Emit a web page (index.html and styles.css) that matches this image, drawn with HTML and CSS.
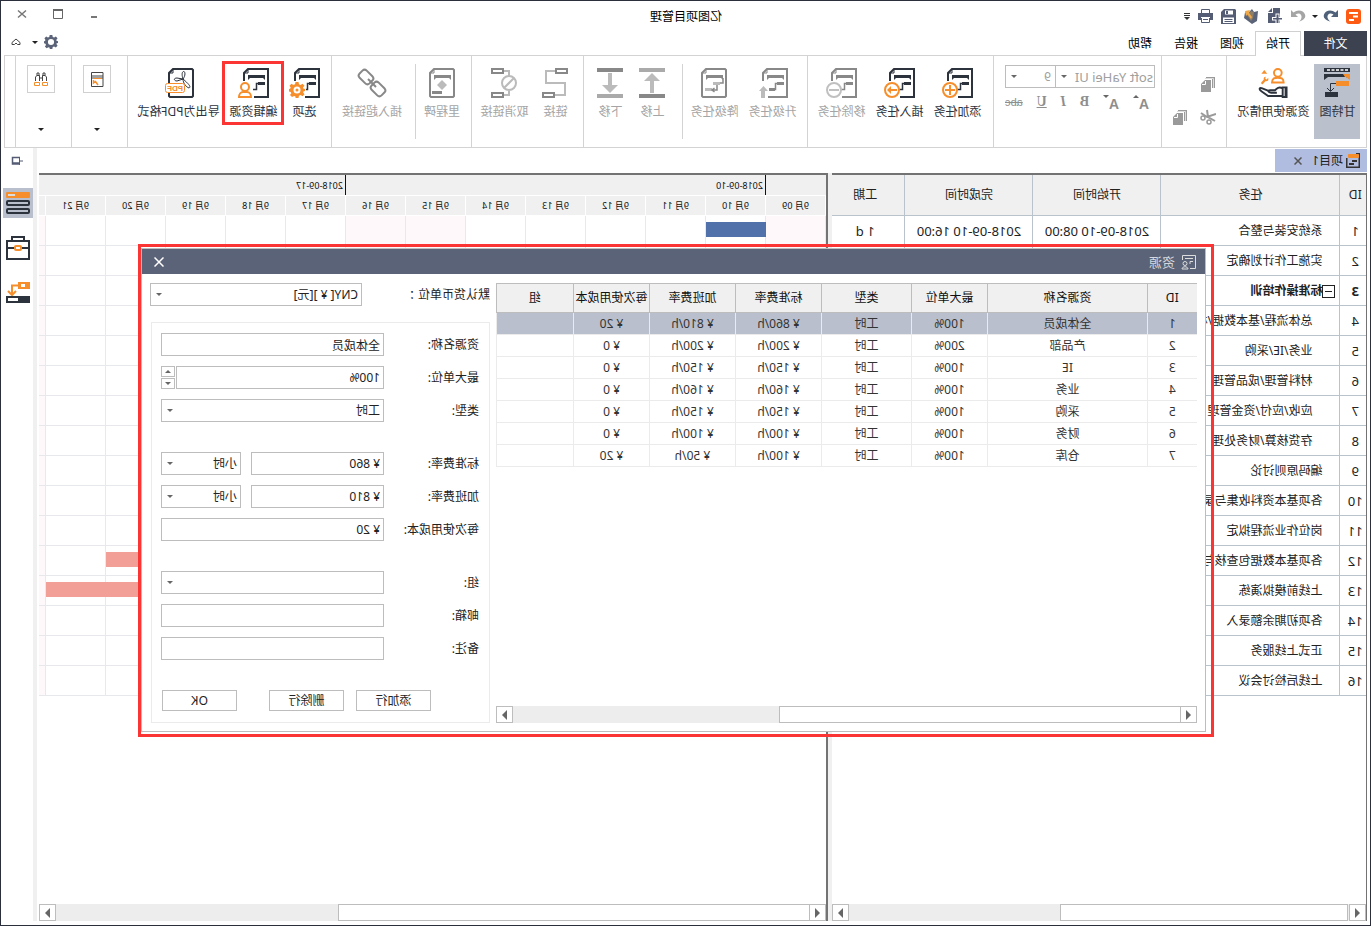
FILE: index.html
```html
<!DOCTYPE html>
<html lang="zh-CN">
<head>
<meta charset="utf-8">
<title>亿图项目管理</title>
<link rel="stylesheet" href="styles.css">
</head>
<body>
<svg class="defs" aria-hidden="true">
  <symbol id="i-doc" viewBox="0 0 31 30">
    <path d="M15 29H1V1H21L25 5V13" fill="none" stroke="currentColor" stroke-width="2"/>
    <path d="M21 1V5H25" fill="none" stroke="currentColor"/>
    <path d="M4 7H21V12L19 10H6L4 12Z" fill="currentColor"/>
    <path d="M4 14H11V17H4Z" fill="currentColor"/>
    <path d="M10 15.500H12.500V21.500H16" fill="none" stroke="currentColor" stroke-width="1.500"/>
  </symbol>
  <symbol id="i-page" viewBox="0 0 26 30">
    <path d="M2 1H21L25 5V28L24 29H2L1 28V2Z" fill="none" stroke="currentColor" stroke-width="2"/>
    <path d="M21 1V5H25" fill="none" stroke="currentColor"/>
    <path d="M4 7H21V12L19 10H6L4 12Z" fill="currentColor"/>
  </symbol>
  <symbol id="i-copy" viewBox="0 0 14 16">
    <path d="M0 1H9V3H3V12H0Z" fill="currentColor"/>
    <path d="M4 4H10L14 8V16H4Z" fill="currentColor"/>
    <path d="M9.500 5V8.500H13" fill="none" stroke="#fff"/>
    <path d="M1.500 12V2.500H10" fill="none" stroke="#ddd"/>
  </symbol>
  <symbol id="i-gear" viewBox="0 0 16 16">
    <path d="M6.500 0h3l.5 2.200 1.600.7L13.500 1.700l2 2-1.200 1.900.6 1.200L16 7V9.500l-1.700.5-.6 1.300 1.300 1.800-2 2-2-1.200-1.500.7L9.500 16h-3L6 13.800l-1.500-.7-2 1.200-2-2 1.300-1.900L1.500 9.500 0 9V7L1.700 6.500 2 5.600.5 3.700l2-2 1.900 1.200L6 2.200Z" fill="currentColor"/>
  </symbol>
</svg>

<div class="app">
  <header class="titlebar">
    <div class="quick">
      <button class="icon-btn" aria-label="亿图"><svg width="15" height="15" viewBox="0 0 15 15"><rect width="15" height="15" rx="3" fill="#fd5a14"/><path d="M3 4H12M3 7.500H8M7 11H12" stroke="#fff" stroke-width="2" fill="none"/></svg></button>
      <button class="icon-btn" aria-label="撤销"><svg width="15" height="14" viewBox="0 0 15 14"><path d="M0 1V8H7L4.500 5.500C8 3 11 5 10.500 8.500C10.300 10 9 11.500 7.500 12.500C13 11 15 8.500 14 5.500C12.500 1 6.500 0 2.500 3.500Z" fill="#4f6079"/></svg></button>
      <i class="caret dark"></i>
      <button class="icon-btn" aria-label="重做"><svg width="15" height="14" viewBox="0 0 15 14"><path d="M15 1V8H8L10.500 5.500C7 3 4 5 4.500 8.500C4.700 10 5.500 11.500 7 12.500C2 11 0 8.500 1 5.500C2.500 1 8.500 0 12.500 3.500Z" fill="#a5a5a5"/></svg></button>
      <button class="icon-btn" aria-label="新建"><svg width="16" height="16" viewBox="0 0 16 16"><path d="M3 0H10V5H15V15H3Z" fill="#555d74"/><path d="M11 0L15 4H11Z" fill="#555d74"/><path d="M3.500 5.500H7.500V9H11V12.500H7.500V16H3.500V12.500H0V9H3.500Z" fill="#fff"/><path d="M4.500 6.500H6.500V10H10V11.500H6.500V15H4.500V11.500H1V10H4.500Z" fill="#555d74"/></svg></button>
      <button class="icon-btn" aria-label="打开"><svg width="15" height="15" viewBox="0 0 15 15"><path d="M1 2L5 3L7 0L10 3L14 3.500L15 9L7 15L2 12Z" fill="#5b6378"/><path d="M5 3L8 2L12 6L8 12L6 9Z" fill="#8f7f66"/><path d="M9 1L14 2L13 7L11.500 5.500L8 10L7 8L10 4Z" fill="#f0a94a"/></svg></button>
      <button class="icon-btn" aria-label="保存"><svg width="15" height="15" viewBox="0 0 15 15"><path d="M1 0H12L15 3V15H0V1Z" fill="#555d74"/><path d="M3 1.500H11V5.500H3ZM2 8.500H13V14H2Z" fill="#fff"/><path d="M8 2H10V5H8ZM3.500 10H11.500V11H3.500ZM3.500 12H11.500V13H3.500Z" fill="#555d74"/></svg></button>
      <button class="icon-btn" aria-label="打印"><svg width="15" height="14" viewBox="0 0 15 14"><path d="M3.500 4V0.500H11.500V4M3.500 9V13.500H11.500V9" fill="#fff" stroke="#555d74"/><path d="M0 4H15V11H12V8H3V11H0Z" fill="#555d74"/><path d="M5 10.500H10" stroke="#555d74"/></svg></button>
      <button class="icon-btn" aria-label="更多"><svg width="6" height="7" viewBox="0 0 6 7"><path d="M0 .5H6M0 2.500H6" stroke="#333"/><path d="M0 4H6L3 7Z" fill="#333"/></svg></button>
    </div>
    <h1>亿图项目管理</h1>
    <div class="winbtns">
      <button aria-label="最小化"><svg width="10" height="10" viewBox="0 0 10 10"><path d="M2 8H8" stroke="#777" stroke-width="2"/></svg></button>
      <button aria-label="最大化"><svg width="10" height="10" viewBox="0 0 10 10"><path d="M.5 1H9.500V9.500H.5Z" stroke="#666" fill="none"/><path d="M0 1H10" stroke="#666" stroke-width="2"/></svg></button>
      <button aria-label="关闭"><svg width="10" height="10" viewBox="0 0 10 10"><path d="M1 1.500L9 8.500M9 1.500L1 8.500" stroke="#777" stroke-width="1.500"/></svg></button>
    </div>
  </header>

  <nav class="tabs">
    <button class="file">文件</button>
    <button class="tab active">开始</button>
    <button class="tab">视图</button>
    <button class="tab">报告</button>
    <button class="tab">帮助</button>
    <div class="tabs-end">
      <button class="icon-btn gear" aria-label="设置"><svg width="14" height="14" viewBox="0 0 16 16"><use href="#i-gear"/><circle cx="8" cy="8" r="3.500" fill="#fff"/></svg></button>
      <i class="caret dark"></i>
      <button class="icon-btn" aria-label="折叠"><svg width="10" height="8" viewBox="0 0 10 8"><path d="M1 6.500H3.500L5 5L6.500 6.500H9V4.500L5 1L1 4.500Z" fill="none" stroke="#444"/></svg></button>
    </div>
  </nav>

  <section class="ribbon">
    <div class="group g-view">
      <button class="tool on"><svg width="26" height="30" viewBox="0 0 26 30"><path d="M0 0H26V4H0Z" fill="#2d333d"/><path d="M2 2H24" stroke="#fff" stroke-width="1.500" stroke-dasharray="3 1.500"/><path d="M0 6H26V12L22 9H4L0 11Z" fill="#2d333d"/><path d="M0 6H7L5 9H4L0 12Z" fill="#f68e2c"/><path d="M1 13H14V18H1Z" fill="#f68e2c"/><path d="M12 24H25V29H12Z" fill="#2d333d"/><path d="M14 15.500H19.500V23M16 20L19.500 23.500L23 20" fill="none" stroke="#2d333d"/></svg><span>甘特图</span></button>
      <button class="tool wide"><svg width="30" height="30" viewBox="0 0 30 31"><path d="M2 20V29M5 20H1V30H5ZM5 21C9 19 11 21 13 23H18C21 23 20 25.500 17 25.500H11M19 24L26 21C29 20 30 22 27 24L20 29H5" fill="none" stroke="#2d333d" stroke-width="2"/><circle cx="10" cy="5" r="4" fill="none" stroke="#f68e2c" stroke-width="2"/><path d="M4 15C4 10 7 10 10 10S16 10 16 15Z" fill="none" stroke="#f68e2c" stroke-width="2"/><path d="M21 6L24 2L27 6Z" fill="#f68e2c"/><path d="M20 10C19 13 21 14 22.500 13.500L26 17L27.500 15.500L24.500 12C25 10 24 9 22.500 9L23 11L21.500 12Z" fill="#f68e2c"/></svg><span>资源使用情况</span></button>
    </div>
    <div class="group g-clip">
      <button class="icon-btn c1" aria-label="粘贴"><svg width="14" height="16"><use href="#i-copy"/></svg></button>
      <button class="icon-btn c2" aria-label="剪切"><svg width="16" height="16" viewBox="0 0 16 16"><path d="M0 5L9 8L15 4M1 12L8 8L9 1" fill="none" stroke="currentColor" stroke-width="2"/><circle cx="7" cy="13" r="2" fill="none" stroke="currentColor" stroke-width="1.500"/><circle cx="13" cy="9" r="2" fill="none" stroke="currentColor" stroke-width="1.500"/></svg></button>
      <button class="icon-btn c3" aria-label="复制"><svg width="14" height="16"><use href="#i-copy"/></svg></button>
    </div>
    <div class="group g-font">
      <div class="font-row">
        <span class="sel muted f-name"><select aria-label="字体"><option>soft YaHei UI</option></select></span>
        <span class="sel muted f-size"><select aria-label="字号"><option>9</option></select></span>
      </div>
      <div class="font-btns">
        <button class="sans" aria-label="增大字号">A<i class="up"></i></button>
        <button class="sans" aria-label="减小字号">A<i class="down"></i></button>
        <button><b>B</b></button>
        <button><em>I</em></button>
        <button><u>U</u></button>
        <button class="abc"><s>abc</s></button>
      </div>
    </div>
    <div class="group g-task">
      <button class="tool"><svg width="31" height="30" viewBox="0 0 31 30"><use href="#i-doc"/><circle cx="23" cy="22" r="7" fill="#fff" stroke="#f68e2c" stroke-width="2"/><path d="M18 22H28M23 17V27" stroke="#f68e2c" stroke-width="2"/></svg><span>添加任务</span></button>
      <button class="tool"><svg width="31" height="30" viewBox="0 0 31 30"><use href="#i-doc"/><circle cx="23" cy="22" r="7" fill="#fff" stroke="#f68e2c" stroke-width="2"/><path d="M18 22H27" stroke="#f68e2c" stroke-width="2"/><path d="M24 18L28 22L24 26Z" fill="#f68e2c"/></svg><span>插入任务</span></button>
      <button class="tool off"><svg width="31" height="30" viewBox="0 0 31 30"><use href="#i-doc"/><circle cx="23" cy="22" r="7" fill="#fff" stroke="#c0c0c0" stroke-width="2"/><path d="M18 22H28" stroke="#c0c0c0" stroke-width="2"/></svg><span>移除任务</span></button>
    </div>
    <div class="group g-level">
      <button class="tool off"><svg width="31" height="30" viewBox="0 0 31 30"><use href="#i-doc"/><path d="M13 20H19V23H13ZM1 28H20V30H1Z" fill="currentColor"/><path d="M23 30V23H20L24.500 18L29 23H27V30Z" fill="#bbb"/></svg><span>升级任务</span></button>
      <button class="tool off"><svg width="26" height="30" viewBox="0 0 26 30"><use href="#i-page"/><path d="M4 10V15H7" fill="none" stroke="currentColor" stroke-width="1.500"/><path d="M7 14H14V17H7ZM15 20H22V23H15Z" fill="#bbb"/><path d="M10 17V22H15M12.500 20L15 22L12.500 24" fill="none" stroke="currentColor" stroke-width="1.500"/></svg><span>降级任务</span></button>
    </div>
    <div class="vline"></div>
    <div class="group g-move">
      <button class="tool off"><svg width="26" height="30" viewBox="0 0 26 30"><path d="M0 0H26V4H0Z" fill="#aaa"/><path d="M0 26H26V30H0Z" fill="#888"/><path d="M11 25V13H5L13 5L21 13H15V25Z" fill="#bbb"/></svg><span>上移</span></button>
      <button class="tool off"><svg width="26" height="30" viewBox="0 0 26 30"><path d="M0 0H26V4H0Z" fill="#888"/><path d="M0 26H26V30H0Z" fill="#aaa"/><path d="M11 5V17H5L13 25L21 17H15V5Z" fill="#bbb"/></svg><span>下移</span></button>
    </div>
    <div class="group g-link">
      <button class="tool off"><svg width="26" height="30" viewBox="0 0 26 30"><path d="M13 3H22V15H3V27H13" fill="none" stroke="#bbb" stroke-width="2"/><path d="M1 1H12V5H1ZM14 25H25V29H14Z" fill="#fff" stroke="#888" stroke-width="2"/></svg><span>链接</span></button>
      <button class="tool off"><svg width="26" height="30" viewBox="0 0 26 30"><path d="M14 3H8V8M14 27H8V23" fill="none" stroke="#bbb" stroke-width="2"/><path d="M14 1H25V5H14ZM14 25H25V29H14Z" fill="#fff" stroke="#888" stroke-width="2"/><circle cx="8" cy="15" r="7" fill="#fff" stroke="#bbb" stroke-width="2"/><path d="M13 10L3 20" stroke="#bbb" stroke-width="2" transform="matrix(-1 0 0 1 16 0)"/></svg><span>取消链接</span></button>
    </div>
    <div class="group g-mile">
      <button class="tool off"><svg width="26" height="30" viewBox="0 0 26 30"><use href="#i-page"/><path d="M13 12L18 17L13 22L8 17Z" fill="#bbb"/><path d="M13 23H23V26H13Z" fill="currentColor"/></svg><span>里程碑</span></button>
    </div>
    <div class="vline"></div>
    <div class="group g-hyper">
      <button class="tool off"><svg width="30" height="30" viewBox="0 0 30 30"><g fill="none" stroke="#888" stroke-width="2"><rect x="-7" y="-5" width="14" height="10" rx="3" transform="translate(21 9) rotate(-45)"/><rect x="-7" y="-5" width="14" height="10" rx="3" transform="translate(9 21) rotate(-45)"/><path d="M11 19L19 11"/></g></svg><span>插入超链接</span></button>
    </div>
    <div class="group g-out">
      <button class="tool opt"><svg width="31" height="30" viewBox="0 0 31 30"><use href="#i-doc"/><circle cx="23" cy="22" r="9" fill="#fff"/><g color="#f68e2c"><use href="#i-gear" x="15" y="14" width="16" height="16"/></g><circle cx="23" cy="22" r="3.500" fill="#fff"/><circle cx="23" cy="22" r="1.500" fill="#f68e2c"/></svg><span>选项</span></button>
      <button class="tool res"><svg width="31" height="30" viewBox="0 0 31 30"><use href="#i-doc"/><circle cx="24" cy="19" r="4" fill="#fff" stroke="#f68e2c" stroke-width="2"/><path d="M18 29C18 26 20 24 22 24H26C28 24 30 26 30 29Z" fill="#fff" stroke="#f68e2c" stroke-width="2"/></svg><span>编辑资源</span></button>
      <button class="tool pdf"><svg width="31" height="30" viewBox="0 0 31 30"><path d="M2 1H21L25 5V28L24 29H2L1 28V2Z" fill="#fff" stroke="#2d333d" stroke-width="2"/><path d="M21 1V5H25" fill="none" stroke="#2d333d"/><path d="M11 11C8 7 9 3 10.500 3.500C12.500 4 12 8 11 11L17 10C21 10 20 13 17 13L11 11C11 15 8 19 5 20C3 19 4 17 11 11Z" fill="none" stroke="#2d333d"/><rect x="9.500" y="15.500" width="19" height="9" rx="2" fill="#fff" stroke="#f68e2c"/><text x="11" y="23" font-size="8" font-weight="700" font-family="Liberation Sans" fill="#f68e2c">PDF</text></svg><span>导出为PDF格式</span></button>
    </div>
    <div class="group g-mini">
      <button class="mini" aria-label="报表"><svg width="14" height="15" viewBox="0 0 14 15"><path d="M1 .5H12.500V14.500H1Z" fill="none" stroke="#444"/><path d="M1 4H13M1 6H13" stroke="#444"/><path d="M2 6.500H11" stroke="#f68e2c"/><path d="M6 13L8.500 9.500L10.500 11V8" fill="none" stroke="#f68e2c" stroke-width="1.500"/></svg></button>
      <i class="caret dark"></i>
    </div>
    <div class="group g-mini">
      <button class="mini" aria-label="查找"><svg width="14" height="15" viewBox="0 0 14 15"><path d="M3 4V1H5V4M9 4V1H11V4M1.500 9V5L3 3.500H5.500V9M8.500 9V3.500H11L12.500 5V9M5.500 6H8.500" fill="none" stroke="#444"/><path d="M.5 10.500H5.500V13.500H.5ZM8.500 10.500H13.500V13.500H8.500Z" fill="none" stroke="#f68e2c"/></svg></button>
      <i class="caret dark"></i>
    </div>
  </section>

  <main class="body">
    <div class="work">
      <div class="doc-tabs">
        <div class="doc-tab">
          <svg width="14" height="15" viewBox="0 0 14 15"><path d="M4 .75H.75V14.250H13.250V5" fill="none" stroke="#333" stroke-width="1.500"/><rect x="1" y="1" width="11" height="4" rx="1" fill="#f68e2c"/><path d="M3 8H8M6 11H11" stroke="#333" stroke-width="2"/></svg>
          <span>项目1</span>
          <button class="icon-btn" aria-label="关闭项目1"><svg width="8" height="8" viewBox="0 0 8 8"><path d="M.5 .5L7.500 7.500M7.500 .5L.5 7.500" stroke="#555" stroke-width="1.500"/></svg></button>
        </div>
      </div>
      <div class="panes">
        <section class="pane list">
          <table class="tasks">
            <colgroup><col class="k-id"><col class="k-name"><col class="k-date"><col class="k-date"><col></colgroup>
            <thead><tr><th>ID</th><th>任务</th><th>开始时间</th><th>完成时间</th><th>工期</th></tr></thead>
            <tbody>
              <tr><td>1</td><td>系统安装与整合</td><td>2018-09-10 08:00</td><td>2018-09-10 16:00</td><td>1 d</td></tr>
              <tr><td>2</td><td>实施工作计划确定</td><td></td><td></td><td></td></tr>
              <tr class="sum"><td>3</td><td><button class="fold" aria-label="折叠任务"></button>标准操作培训</td><td></td><td></td><td></td></tr>
              <tr class="sub"><td>4</td><td>总体流程/基本数据/权限</td><td></td><td></td><td></td></tr>
              <tr class="sub"><td>5</td><td>业务/IE/采购</td><td></td><td></td><td></td></tr>
              <tr class="sub"><td>6</td><td>材料管理/成品管理</td><td></td><td></td><td></td></tr>
              <tr class="sub"><td>7</td><td>应收/应付/资金管理</td><td></td><td></td><td></td></tr>
              <tr class="sub"><td>8</td><td>存货核算/财务处理</td><td></td><td></td><td></td></tr>
              <tr><td>9</td><td>编码原则讨论</td><td></td><td></td><td></td></tr>
              <tr><td>10</td><td>各项基本资料收集与录入</td><td></td><td></td><td></td></tr>
              <tr><td>11</td><td>岗位作业流程拟定</td><td></td><td></td><td></td></tr>
              <tr><td>12</td><td>各项基本数据包查核与</td><td></td><td></td><td></td></tr>
              <tr><td>13</td><td>上线前模拟演练</td><td></td><td></td><td></td></tr>
              <tr><td>14</td><td>各项初期余额录入</td><td></td><td></td><td></td></tr>
              <tr><td>15</td><td>正式上线服务</td><td></td><td></td><td></td></tr>
              <tr><td>16</td><td>上线后检讨会议</td><td></td><td></td><td></td></tr>
            </tbody>
          </table>
          <div class="scroll s-list"><button aria-label="向左"><i class="l"></i></button><span class="thumb"></span><span class="track"></span><button aria-label="向右"><i class="r"></i></button></div>
        </section>
        <div class="splitter"></div>
        <section class="pane chart">
          <div class="weeks"><span></span><span class="wk">2018-09-10</span><span class="wk">2018-09-17</span></div>
          <div class="days"><span>9月 09</span><span>9月 10</span><span>9月 11</span><span>9月 12</span><span>9月 13</span><span>9月 14</span><span>9月 15</span><span>9月 16</span><span>9月 17</span><span>9月 18</span><span>9月 19</span><span>9月 20</span><span>9月 21</span><span></span></div>
          <div class="grid">
            <i class="col rest"></i><i class="col"></i><i class="col"></i><i class="col"></i><i class="col"></i><i class="col"></i><i class="col rest"></i><i class="col rest"></i><i class="col"></i><i class="col"></i><i class="col"></i><i class="col"></i><i class="col"></i><i class="col rest"></i>
            <b class="bar b1"></b><b class="bar b12"></b><b class="bar b13"></b>
          </div>
          <div class="scroll s-chart"><button aria-label="向左"><i class="l"></i></button><span class="thumb"></span><span class="track"></span><button aria-label="向右"><i class="r"></i></button></div>
        </section>
      </div>
    </div>
    <aside class="side">
      <button class="icon-btn pin" aria-label="固定"><svg width="12" height="10" viewBox="0 0 12 10"><path d="M3.500 1V9M0 5H3" stroke="#555d74" fill="none"/><path d="M3 1.500H10.500V8H3M3 7H11" stroke="#555d74" stroke-width="1.500" fill="none"/></svg></button>
      <button class="side-btn on" aria-label="列表"><svg width="24" height="22" viewBox="0 0 24 22"><rect width="24" height="6" rx="1" fill="#f68e2c"/><path d="M15 3H22" stroke="#ddd" stroke-width="2"/><rect x="1" y="9" width="22" height="4" rx="1" fill="none" stroke="#2d333d" stroke-width="2"/><rect x="1" y="17" width="22" height="4" rx="1" fill="none" stroke="#2d333d" stroke-width="2"/></svg></button>
      <button class="side-btn" aria-label="资源"><svg width="24" height="24" viewBox="0 0 24 24"><path d="M1 5H23V23H1ZM6 4V1H18V4M1 12H23" fill="none" stroke="#2d333d" stroke-width="2"/><rect x="9" y="10" width="6" height="4" rx="1" fill="#fff" stroke="#f68e2c" stroke-width="2"/></svg></button>
      <button class="side-btn" aria-label="链接"><svg width="24" height="22" viewBox="0 0 24 22"><path d="M0 0H12V7H0ZM5 2V5H9V2Z" fill="#f68e2c" fill-rule="evenodd"/><path d="M12 3.500H18V12M14 9L18 13L22 9" fill="none" stroke="#f68e2c" stroke-width="2"/><path d="M0 14H24V21H0ZM12 16V19H22V16Z" fill="#2d333d" fill-rule="evenodd"/></svg></button>
    </aside>
  </main>

  <div class="callout">
    <section class="dialog" role="dialog" aria-labelledby="dlg-title">
      <header class="dlg-head">
        <svg width="16" height="16" viewBox="0 0 16 16"><path d="M7 14.500H1.500V1.500H14.500V6M4 4.500H12" fill="none" stroke="#ddd"/><path d="M4 7.500H7V10M9 15C9 12 15 12 15 15Z" fill="none" stroke="#ddd"/><circle cx="12" cy="9.500" r="2" fill="none" stroke="#ddd"/></svg>
        <h2 id="dlg-title">资源</h2>
        <button class="icon-btn" aria-label="关闭"><svg width="10" height="10" viewBox="0 0 10 10"><path d="M.5 .5L9.500 9.500M9.500 .5L.5 9.500" stroke="#fff" stroke-width="1.500"/></svg></button>
      </header>
      <div class="dlg-body">
        <div class="res-pane">
          <table class="res">
            <colgroup><col class="r1"><col class="r2"><col class="r3"><col class="r4"><col class="r5"><col class="r5"><col class="r3"><col></colgroup>
            <thead><tr><th>ID</th><th>资源名称</th><th>最大单位</th><th>类型</th><th>标准费率</th><th>加班费率</th><th>每次使用成本</th><th>组</th></tr></thead>
            <tbody>
              <tr class="cur"><td>1</td><td>全体成员</td><td>100%</td><td>工时</td><td>¥ 860/h</td><td>¥ 810/h</td><td>¥ 20</td><td></td></tr>
              <tr><td>2</td><td>产品部</td><td>200%</td><td>工时</td><td>¥ 200/h</td><td>¥ 200/h</td><td>¥ 0</td><td></td></tr>
              <tr><td>3</td><td>IE</td><td>100%</td><td>工时</td><td>¥ 150/h</td><td>¥ 150/h</td><td>¥ 0</td><td></td></tr>
              <tr><td>4</td><td>业务</td><td>100%</td><td>工时</td><td>¥ 160/h</td><td>¥ 160/h</td><td>¥ 0</td><td></td></tr>
              <tr><td>5</td><td>采购</td><td>100%</td><td>工时</td><td>¥ 150/h</td><td>¥ 150/h</td><td>¥ 0</td><td></td></tr>
              <tr><td>6</td><td>财务</td><td>100%</td><td>工时</td><td>¥ 100/h</td><td>¥ 100/h</td><td>¥ 0</td><td></td></tr>
              <tr><td>7</td><td>仓库</td><td>100%</td><td>工时</td><td>¥ 100/h</td><td>¥ 50/h</td><td>¥ 20</td><td></td></tr>
            </tbody>
          </table>
          <div class="scroll s-res"><button aria-label="向左"><i class="l"></i></button><span class="thumb"></span><span class="track"></span><button aria-label="向右"><i class="r"></i></button></div>
        </div>
        <form class="form">
          <div class="currency"><label for="cur">默认货币单位 ：</label><span class="sel"><select id="cur"><option>CNY[ ¥ ][元]</option></select></span></div>
          <div class="box">
            <div class="row"><label for="f1">资源名称:</label><input id="f1" type="text" value="全体成员"></div>
            <div class="row"><label for="f2">最大单位:</label><input id="f2" type="text" value="100%"><span class="spin"><button type="button" aria-label="增加"><i class="up"></i></button><button type="button" aria-label="减少"><i class="down"></i></button></span></div>
            <div class="row"><label for="f3">类型:</label><span class="sel"><select id="f3"><option>工时</option></select></span></div>
            <div class="row part"><label for="f4">标准费率:</label><input id="f4" type="text" value="¥ 860"><span class="sel unit"><select aria-label="标准费率单位"><option>小时</option></select></span></div>
            <div class="row"><label for="f5">加班费率:</label><input id="f5" type="text" value="¥ 810"><span class="sel unit"><select aria-label="加班费率单位"><option>小时</option></select></span></div>
            <div class="row"><label for="f6">每次使用成本:</label><input id="f6" type="text" value="¥ 20"></div>
            <div class="row part"><label for="f7">组:</label><span class="sel"><select id="f7"><option></option></select></span></div>
            <div class="row"><label for="f8">邮箱:</label><input id="f8" type="text"></div>
            <div class="row"><label for="f9">备注:</label><input id="f9" type="text"></div>
            <div class="actions"><button type="button">添加行</button><button type="button">删除行</button><button type="button" class="ok">OK</button></div>
          </div>
        </form>
      </div>
    </section>
  </div>
</div>
</body>
</html>
```

FILE: styles.css
```css
* { box-sizing: border-box; }
body { margin: 0; background: #fff; overflow: hidden; }
body, button, input, select { font: 12px/16px "Noto Sans", "Noto Sans CJK SC", sans-serif; color: #222; }
button { margin: 0; padding: 0; border: 0; background: none; }
h1, h2 { margin: 0; font-size: 12px; font-weight: 400; }
i { font-style: normal; }
svg { display: block; flex: none; }
.defs { position: absolute; width: 0; height: 0; }

/* the whole window is mirrored left to right */
.app { position: relative; display: flex; flex-direction: column; min-height: 100vh; border: 1px solid #2b2f3b; background: #fff; transform: scaleX(-1); }

.icon-btn { display: flex; align-items: center; justify-content: center; color: inherit; }
.caret { border: 3px solid transparent; border-top-color: #777; border-bottom: 0; width: 0; height: 0; flex: none; }
.caret.dark { border-top-color: #222; }
.up, .down { width: 0; height: 0; border: 3px solid transparent; }
.up { border-top: 0; border-bottom-color: #666; }
.down { border-bottom: 0; border-top-color: #666; }

.titlebar { display: grid; grid-template-columns: 1fr auto 1fr; align-items: center; height: 30px; padding: 0 16px 0 9px; }
.titlebar h1 { padding: 1px 0 0 6px; color: #000; }
.quick { display: flex; align-items: center; gap: 8px; }
.quick .caret { margin: 0 -3px 0 -3px; }
.quick .caret + .icon-btn { margin-left: 1px; }
.winbtns { display: flex; justify-content: flex-end; gap: 26px; padding-bottom: 4px; }

.tabs { display: flex; height: 25px; margin: 0 3px -1px; position: relative; }
.file { width: 63px; height: 25px; margin-right: 3px; background: #3c4250; color: #fff; }
.tab { width: 46px; color: #000; }
.tab.active { border: 1px solid #d0d0d0; border-bottom: 0; background: #fff; position: relative; z-index: 1; }
.tabs-end { display: flex; align-items: center; gap: 9px; margin-left: auto; padding: 0 7px 3px 0; }
.tabs-end .caret { margin: 0 2px 0 -3px; }
.gear { color: #5b6378; }

.ribbon { display: flex; height: 93px; margin: 0 3px; border: 1px solid #d3d3d3; }
.group { display: flex; justify-content: center; padding: 8px 0 0 3px; position: relative; flex: none; border-right: 1px solid #d3d3d3; }
.vline { width: 1px; height: 75px; margin: 8px 0 0 -1px; background: #d3d3d3; position: relative; }
.g-view { width: 140px; padding-left: 0; }
.g-clip { width: 65px; }
.g-font { width: 168px; }
.g-task { width: 186px; padding-left: 2px; }
.g-level { width: 125px; border-right-color: transparent; }
.g-move { width: 99px; }
.g-link { width: 112px; justify-content: flex-start; padding-left: 2px; }
.g-mile { width: 56px; border-right-color: transparent; }
.g-hyper { width: 84px; }
.g-out { width: 204px; padding-left: 0; }
.g-mini { width: 56px; padding: 9px 0 0 4px; flex-direction: column; justify-content: flex-start; align-items: center; }
.tool { display: flex; flex-direction: column; align-items: center; gap: 6px; width: 58px; height: 75px; padding-top: 4px; white-space: nowrap; color: #2d333d; }
.tool.off { color: #888; }
.tool.off span { color: #a5a5a5; }
.tool.on { width: 46px; background: #bac0cc; }
.tool.wide { width: 82px; }
.g-move .tool { width: 42px; }
.g-link .tool { width: 51px; }
.tool.opt { width: 50px; }
.tool.res { width: 52px; position: relative; }
.tool.res::after { content: ""; position: absolute; inset: -3px -5px 14px; border: 3px solid #fb3434; }
.tool.pdf { width: 98px; }
.mini { display: flex; align-items: center; justify-content: center; width: 28px; height: 28px; border: 1px solid #d0d0d0; margin-bottom: 35px; }

.g-clip { display: grid; grid-template-columns: 16px 16px; column-gap: 12px; align-content: start; padding: 20px 0 0; row-gap: 17px; color: #9a9a9a; }
.c1 { grid-column: 1; }
.c2 { grid-column: 1; grid-row: 2; }
.c3 { grid-row: 2; }
.g-font { flex-direction: column; justify-content: flex-start; padding: 9px 11px 0 6px; gap: 5px; }
.font-row { display: flex; }
.f-name { width: 100px; }
.f-size { width: 51px; margin-left: -1px; }
.muted select { color: #a0a0a0; }
.f-name select { font-size: 13px; padding-left: 1px; }
.font-btns { display: flex; justify-content: space-between; padding: 0 0 0 6px; }
.font-btns button { color: #8e8e8e; font: 700 14px/18px "Liberation Serif", serif; display: flex; }
.font-btns .sans { font: 700 14px/22px "Liberation Sans", sans-serif; }
.font-btns .abc { font: 400 11px/18px "Liberation Sans", sans-serif; }
.font-btns i { margin-top: 2px; }

.sel { position: relative; display: block; height: 23px; }
.sel::after { content: ""; position: absolute; right: 6px; top: 10px; border: 3px solid transparent; border-top-color: #666; border-bottom: 0; }
select, input { width: 100%; height: 23px; padding: 0 3px; border: 1px solid #bdbdbd; border-radius: 0; background: #fff; appearance: none; outline: 0; }
.f-size select { padding-left: 4px; }

.body { display: flex; flex: 1; margin: 0 3px 4px; }
.work { flex: 1; min-width: 0; display: flex; flex-direction: column; padding-right: 2px; }
.doc-tabs { display: flex; padding: 1px 0; }
.doc-tab { display: flex; align-items: center; gap: 3px; width: 92px; height: 23px; padding-left: 7px; background: #b0bde0; }
.doc-tab .icon-btn { margin-left: 7px; }
.panes { display: flex; flex: 1; min-height: 0; }
.pane { display: flex; flex-direction: column; border-top: 2px solid #737373; min-width: 0; }
.list { flex: 0 0 535px; border-left: 1px solid #737373; }
.splitter { width: 4px; background: #f0f0f0; }
.chart { flex: 1; border-left: 2px solid #737373; }

table { border-collapse: collapse; table-layout: fixed; width: 100%; }
th { font-weight: 400; background: #f0f0f0; }
th, td { padding: 0; text-align: center; white-space: nowrap; overflow: hidden; }
.tasks th { height: 40px; }
.tasks td { height: 30px; padding-top: 1px; font-size: 13px; }
.tasks td:nth-child(2) { font-size: 12px; text-align: left; padding-left: 17px; }
.tasks th, .tasks td { border-right: 1px solid #b9c3cc; border-bottom: 1px solid #b9c3cc; }
.tasks th:last-child, .tasks td:last-child { border-right: 0; padding-left: 6px; }
.tasks th:first-child, .tasks td:first-child { padding-right: 4px; }
.tasks .sub td:nth-child(2) { padding-left: 27px; }
.tasks .sum td { font-weight: 700; }
.tasks .sum td:nth-child(2) { padding-left: 4px; }
.fold { width: 13px; height: 13px; border: 1px solid #222; background: linear-gradient(#222, #222) center / 7px 1px no-repeat; vertical-align: -2px; }
.k-id { width: 26px; }
.k-name { width: 179px; }
.k-date { width: 128px; }

.scroll { display: flex; height: 17px; margin-top: auto; background: #ededed; }
.scroll button { width: 17px; display: flex; align-items: center; justify-content: center; border: 1px solid #bdbdbd; background: #fff; flex: none; }
.thumb { border: 1px solid #bdbdbd; background: #fff; }
.track { flex: 1; }
.l, .r { border: 5px solid transparent; }
.l { border-left: 0; border-right-color: #666; }
.r { border-right: 0; border-left-color: #666; }
.s-list .thumb { flex: 0 0 54%; margin-left: 1px; }
.s-chart .thumb { flex: 0 0 60%; margin-left: -1px; }

.weeks, .days { display: grid; background: #f0f0f0; color: #111; font-size: 9px; border-bottom: 1px solid #fff; overflow: hidden; }
.weeks { grid-template-columns: 60px 420px 1fr; height: 21px; line-height: 21px; }
.wk { border-left: 1px solid #111; padding-left: 2px; }
.days, .grid { grid-template-columns: repeat(13, 60px) 1fr; }
.days { height: 20px; line-height: 20px; text-align: center; }
.days span { border-left: 1px solid #fff; }
.grid { display: grid; grid-template-rows: repeat(16, 30px); position: relative; }
.grid::after { content: ""; position: absolute; inset: 0; background: repeating-linear-gradient(transparent 0 29px, #e6e8eb 29px 30px); }
.col { grid-row: 1 / -1; border-left: 1px solid #e9e9e9; }
.rest { background: #fff8fa; }
.bar { height: 15px; margin-top: 6px; position: relative; z-index: 1; background: #f2a097; }
.b1 { grid-area: 1 / 2 / 2 / 3; background: #5071aa; }
.b12 { grid-area: 12 / 12 / 13 / 13; }
.b13 { grid-area: 13 / 11 / 14 / 14; }
.col:nth-child(1) { grid-column: 1; } .col:nth-child(2) { grid-column: 2; } .col:nth-child(3) { grid-column: 3; }
.col:nth-child(4) { grid-column: 4; } .col:nth-child(5) { grid-column: 5; } .col:nth-child(6) { grid-column: 6; }
.col:nth-child(7) { grid-column: 7; } .col:nth-child(8) { grid-column: 8; } .col:nth-child(9) { grid-column: 9; }
.col:nth-child(10) { grid-column: 10; } .col:nth-child(11) { grid-column: 11; } .col:nth-child(12) { grid-column: 12; }
.col:nth-child(13) { grid-column: 13; } .col:nth-child(14) { grid-column: 14; }

.side { display: flex; flex-direction: column; align-items: center; width: 33px; padding-top: 8px; border-left: 4px solid #f0f0f0; }
.pin { margin: 0 0 22px 3px; }
.side-btn { display: flex; align-items: center; justify-content: center; width: 30px; height: 30px; margin-bottom: 15px; }
.side-btn.on { background: #b9bfcc; }

.callout { position: absolute; z-index: 5; left: 156px; right: 137px; top: 243px; padding: 1px 0 2px 5px; border: 3px solid #fb3434; }
.dialog { background: #fff; border: 1px solid #bdbdbd; }
.dlg-head { display: flex; align-items: center; gap: 6px; height: 25px; padding: 0 12px 0 8px; background: #5b6378; }
.dlg-head h2 { color: #d5d8de; font-size: 13px; }
.dlg-head .icon-btn { margin-left: auto; }
.dlg-body { display: flex; gap: 6px; padding: 9px 8px 8px; }
.res-pane { flex: 1; display: flex; flex-direction: column; min-width: 0; }
.res th { height: 29px; border: 1px solid #bdbdbd; border-left: 0; color: #111; }
.res td { height: 22px; border: 1px solid #ebebeb; color: #333; }
.res th, .res td { padding-left: 1px; }
.res td:first-child { border-left: 0; }
.res .cur td { background: #b9bfcc; }
.r1 { width: 49px; } .r2 { width: 160px; } .r3 { width: 76px; } .r4 { width: 90px; } .r5 { width: 86px; }
.s-res .thumb { flex: 0 0 402px; margin-left: -1px; }
.form { width: 340px; flex: none; }
.currency { display: flex; align-items: center; justify-content: space-between; }
.currency .sel { width: 212px; }
.box { margin: 16px 1px 0 0; padding: 10px 9px 11px 10px; border: 1px solid #ebebeb; }
.row { display: flex; margin-bottom: 10px; }
.row label { flex: 1; line-height: 23px; white-space: nowrap; }
.row > input, .row > .sel { width: 223px; }
.row #f2 { width: 208px; margin-right: 1px; }
.row #f4, .row #f5 { width: 133px; }
.row > .unit { width: 80px; margin-left: 10px; }
.part { margin-top: 30px; }
.spin { display: flex; flex-direction: column; gap: 1px; width: 14px; }
.spin button { height: 11px; display: flex; align-items: center; justify-content: center; border: 1px solid #bdbdbd; }
.actions { display: flex; gap: 12px; margin-top: 30px; padding: 0 1px 0 48px; }
.actions button { width: 75px; height: 21px; border: 1px solid #bdbdbd; }
.actions .ok { margin-left: auto; }
```
